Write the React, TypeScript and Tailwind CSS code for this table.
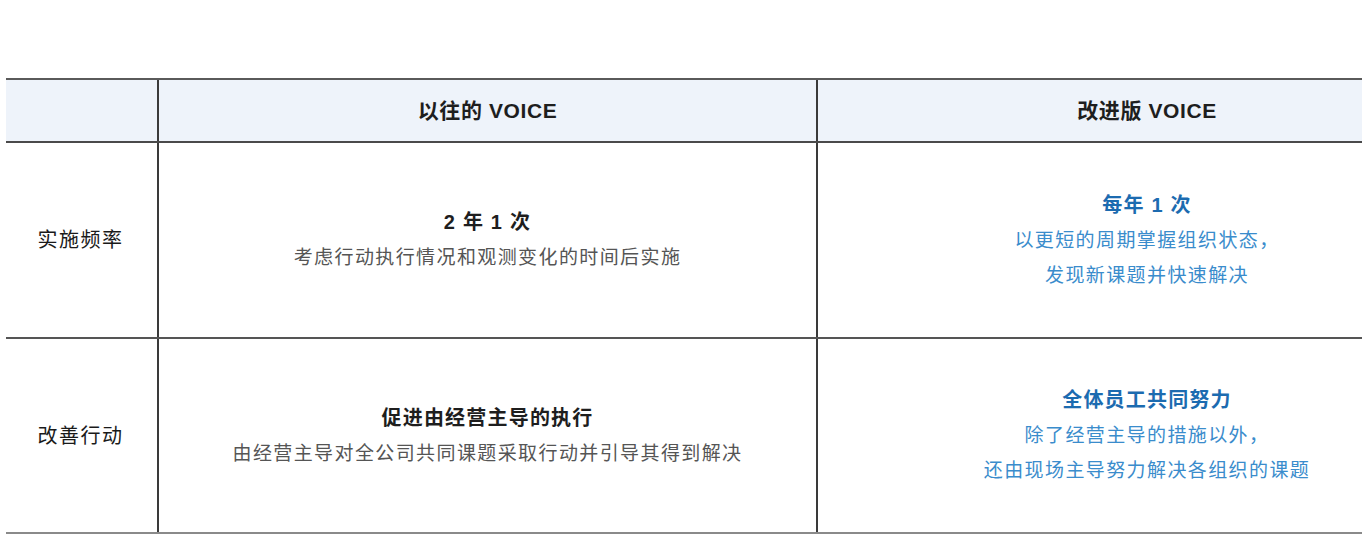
const font = '"Liberation Sans", "Noto Sans CJK SC", sans-serif';

type Row = {
  label: string;
  oldTitle: string;
  oldLines: string[];
  newTitle: string;
  newLines: string[];
  last?: boolean;
};

const rows: Row[] = [
  {
    label: '实施频率',
    oldTitle: '2 年 1 次',
    oldLines: ['考虑行动执行情况和观测变化的时间后实施'],
    newTitle: '每年 1 次',
    newLines: ['以更短的周期掌握组织状态，', '发现新课题并快速解决'],
  },
  {
    label: '改善行动',
    oldTitle: '促进由经营主导的执行',
    oldLines: ['由经营主导对全公司共同课题采取行动并引导其得到解决'],
    newTitle: '全体员工共同努力',
    newLines: ['除了经营主导的措施以外，', '还由现场主导努力解决各组织的课题'],
    last: true,
  },
];

export default function App() {
  return (
    <div
      className="h-[540px] w-[1362px] overflow-hidden bg-white pl-[6px] pt-[78px]"
      style={{ fontFamily: font }}
    >
      <div className="w-[1470px] border-t-2 border-[#5a5a5a]">
        {/* header */}
        <div className="grid h-[63px] grid-cols-[151px_659px_660px] border-b-2 border-[#4a4a4a] bg-[#eef3fa]">
          <div />
          <div className="flex items-center justify-center border-l-2 border-[#3a3a3a] text-[21px] font-bold tracking-[0.6px] text-[#1e1e1e]">
            以往的 VOICE
          </div>
          <div className="flex items-center justify-center border-l-2 border-[#3a3a3a] text-[21px] font-bold tracking-[0.6px] text-[#1e1e1e]">
            改进版 VOICE
          </div>
        </div>

        {rows.map((r) => (
          <div
            key={r.label}
            className={`grid grid-cols-[151px_659px_660px] border-b-2 ${
              r.last ? 'h-[195px] border-[#8a8a8a]' : 'h-[196px] border-[#555]'
            }`}
          >
            <div className="flex items-center justify-center pr-[2px] text-[20px] tracking-[1.5px] text-[#1a1a1a]">
              {r.label}
            </div>
            <div className="flex flex-col items-center justify-center border-l-2 border-[#3a3a3a] leading-[35px]">
              <div className="text-[20px] font-bold tracking-[1.2px] text-[#1e1e1e]">
                {r.oldTitle}
              </div>
              {r.oldLines.map((l) => (
                <div key={l} className="text-[19px] tracking-[1.4px] text-[#555]">
                  {l}
                </div>
              ))}
            </div>
            <div className="flex flex-col items-center justify-center border-l-2 border-[#3a3a3a] leading-[35px]">
              <div className="text-[20px] font-bold tracking-[1.2px] text-[#1c6bb0]">
                {r.newTitle}
              </div>
              {r.newLines.map((l) => (
                <div key={l} className="text-[19px] tracking-[1.4px] text-[#3a8ccc]">
                  {l}
                </div>
              ))}
            </div>
          </div>
        ))}
      </div>
    </div>
  );
}
